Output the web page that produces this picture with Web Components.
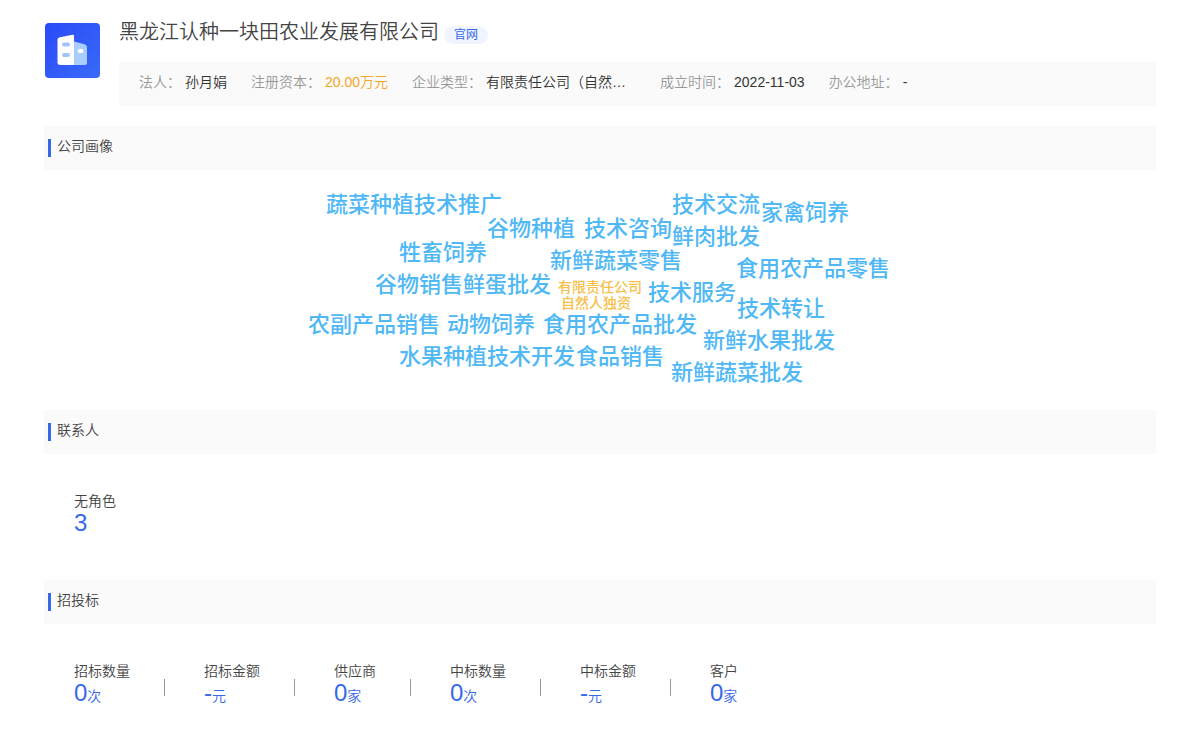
<!DOCTYPE html>
<html lang="zh-CN">
<head>
<meta charset="utf-8">
<meta name="viewport" content="width=device-width, initial-scale=1">
<title>黑龙江认种一块田农业发展有限公司</title>
<style>
  body {
    margin: 0;
    background: #fff;
    color: #444;
    font: 14px/20px "Liberation Sans", "Noto Sans CJK SC", sans-serif;
    font-weight: 350;
    --brand: #3768e8;
    --panel: #fafafa;
  }
</style>
</head>
<body>
<company-page>
  <company-header slot="header" name="黑龙江认种一块田农业发展有限公司">
    <info-item label="法人">孙月娟</info-item>
    <info-item label="注册资本" tone="money">20.00万元</info-item>
    <info-item label="企业类型" wide>有限责任公司（自然…</info-item>
    <info-item label="成立时间">2022-11-03</info-item>
    <info-item label="办公地址">-</info-item>
  </company-header>
  <page-section heading="公司画像"><word-cloud></word-cloud></page-section>
  <page-section heading="联系人">
    <stat-row><stat-item label="无角色" value="3"></stat-item></stat-row>
  </page-section>
  <page-section heading="招投标">
    <stat-row>
      <stat-item label="招标数量" value="0" unit="次"></stat-item>
      <stat-item label="招标金额" value="-" unit="元"></stat-item>
      <stat-item label="供应商" value="0" unit="家"></stat-item>
      <stat-item label="中标数量" value="0" unit="次"></stat-item>
      <stat-item label="中标金额" value="-" unit="元"></stat-item>
      <stat-item label="客户" value="0" unit="家"></stat-item>
    </stat-row>
  </page-section>
</company-page>
<script>
  class Base extends HTMLElement {
    connectedCallback() {
      if (!this.shadowRoot) this.attachShadow({ mode: 'open' }).innerHTML = this.view();
    }
    attr(name) { return this.getAttribute(name) || ''; }
  }

  customElements.define('company-page', class extends Base {
    view() {
      return `<style>
        :host { display: block; padding: 19px 44px 16px; }
        main { margin-top: 20px; }
      </style>
      <slot name="header"></slot>
      <main><slot></slot></main>`;
    }
  });

  customElements.define('company-logo', class extends Base {
    view() {
      return `<style>
        :host { display: block; width: 56px; height: 56px; }
        svg { display: block; }
      </style>
      <svg width="56" height="56" viewBox="0 0 56 56" aria-hidden="true">
        <defs>
          <linearGradient id="g" x1="0" y1="0" x2="1" y2="1">
            <stop offset="0" stop-color="#2a4af8"/><stop offset="1" stop-color="#386af8"/>
          </linearGradient>
        </defs>
        <rect x="1" y="0" width="55" height="55" rx="4" fill="url(#g)"/>
        <path d="M30 18.500 L40.500 21.300 Q43 22 43 24.500 V39.500 Q43 42 40.500 42 H30 Z" fill="#a9cdfc"/>
        <path d="M16.500 42 Q13.500 42 13.500 39.500 V16.500 Q13.500 14.700 16 14.200 L28.500 11.700 Q30 11.400 30 13 V42 Z" fill="#fff"/>
        <rect x="18" y="19.500" width="8" height="4" rx="2" fill="#a3c4f8"/>
        <rect x="18" y="30" width="8" height="4" rx="2" fill="#a3c4f8"/>
        <rect x="33.500" y="26" width="6" height="4" rx="2" fill="#fff"/>
      </svg>`;
    }
  });

  customElements.define('company-header', class extends Base {
    view() {
      return `<style>
        :host { display: flex; gap: 19px; }
        company-logo { flex: none; margin-top: 4px; }
        .body { flex: 1; min-width: 0; }
        .title { display: flex; align-items: flex-start; gap: 5px; }
        h1 { margin: 0; font-size: 20px; line-height: 26px; font-weight: inherit; }
        a { margin-top: 7px; padding: 0 10px; border-radius: 9px; background: #eff4fe;
            color: var(--brand); font-size: 12px; line-height: 18px; font-weight: 400; text-decoration: none; }
        .info { display: flex; flex-wrap: wrap; column-gap: 24px; margin-top: 17px;
                padding: 10px 20px 14px; background: var(--panel); }
      </style>
      <company-logo></company-logo>
      <div class="body">
        <div class="title"><h1>${this.attr('name')}</h1><a href="#">官网</a></div>
        <div class="info"><slot></slot></div>
      </div>`;
    }
  });

  customElements.define('info-item', class extends Base {
    view() {
      return `<style>
        :host { display: flex; gap: 4px; white-space: nowrap; }
        .label { color: #999; }
        .value { color: #333; }
        :host([tone="money"]) .value { color: #f5a623; }
        :host([wide]) .value { min-width: 150px; }
      </style>
      <span class="label">${this.attr('label')}：</span><span class="value"><slot></slot></span>`;
    }
  });

  customElements.define('page-section', class extends Base {
    view() {
      return `<style>
        :host { display: block; }
        header { display: flex; align-items: center; gap: 6px; height: 44px; padding-left: 4px; background: var(--panel); }
        header::before { content: ""; width: 3px; height: 18px; background: var(--brand); }
        h2 { margin: 0 0 4px; font-size: 14px; line-height: 20px; font-weight: inherit; }
      </style>
      <section><header><h2>${this.attr('heading')}</h2></header><slot></slot></section>`;
    }
  });

  customElements.define('word-cloud', class extends Base {
    view() {
      const words = [
        ['蔬菜种植技术推广', 26, 12], ['技术交流', 372, 12], ['家禽饲养', 461, 20],
        ['谷物种植', 187, 36], ['技术咨询', 284, 36], ['鲜肉批发', 372, 44],
        ['牲畜饲养', 99, 60], ['新鲜蔬菜零售', 250, 68], ['食用农产品零售', 436, 76],
        ['谷物销售', 75, 92], ['鲜蛋批发', 163, 92], ['技术服务', 348, 100],
        ['技术转让', 437, 116], ['农副产品销售', 8, 132], ['动物饲养', 147, 132],
        ['食用农产品批发', 243, 132], ['新鲜水果批发', 403, 148], ['水果种植', 99, 164],
        ['技术开发', 187, 164], ['食品销售', 276, 164], ['新鲜蔬菜批发', 371, 180],
        ['有限责任公司', 258, 94, 'core'], ['自然人独资', 261, 110, 'core'],
      ];
      return `<style>
        :host { display: block; height: 240px; }
        ul { position: relative; width: 600px; height: 240px; margin: 0 auto; padding: 0; list-style: none; }
        li { position: absolute; color: #4fb8f5; font-size: 22px; line-height: 24px; white-space: nowrap; font-weight: 500; }
        .core { color: #f7c04a; font-size: 14px; }
      </style>
      <ul>${words.map(([t, x, y, c]) =>
        `<li${c ? ` class="${c}"` : ''} style="left:${x}px;top:${y + 11}px">${t}</li>`).join('')}</ul>`;
    }
  });

  customElements.define('stat-row', class extends Base {
    view() {
      return `<style>:host { display: flex; flex-wrap: wrap; padding: 37px 30px 45px; }</style><slot></slot>`;
    }
  });

  customElements.define('stat-item', class extends Base {
    view() {
      const unit = this.attr('unit');
      return `<style>
        :host { display: flex; align-items: center; }
        :host(:not(:last-child))::after { content: ""; width: 1px; height: 17px; margin: 8px 39px 0 34px; background: #999; }
        dl, dd { margin: 0; }
        dd { color: var(--brand); font-size: 24px; line-height: 24px; }
        small { font-size: 14px; line-height: 20px; }
      </style>
      <dl><dt>${this.attr('label')}</dt><dd>${this.attr('value')}${unit ? `<small>${unit}</small>` : ''}</dd></dl>`;
    }
  });
</script>
</body>
</html>
